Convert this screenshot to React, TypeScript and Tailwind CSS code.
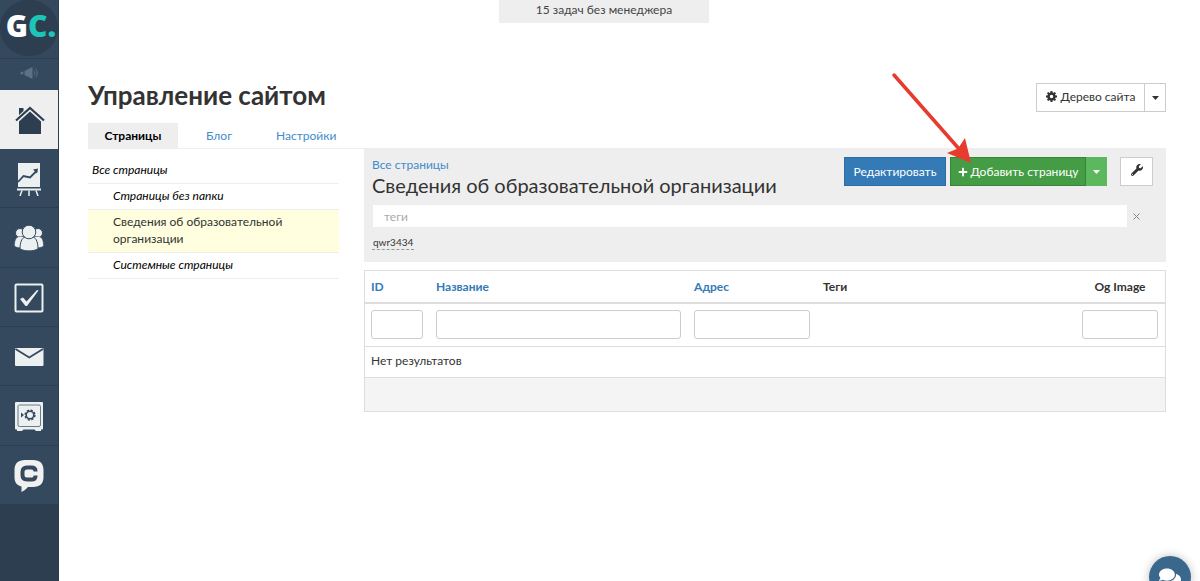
import type { ReactNode } from "react";
import { FaPlus, FaWrench, FaComments } from "react-icons/fa";

type NavItem = {
  label: string;
  icon: ReactNode;
};

type TreeItem = {
  title: string;
  nested?: boolean;
  active?: boolean;
};

const treeItems: TreeItem[] = [
  { title: "Все страницы" },
  { title: "Страницы без папки", nested: true },
  { title: "Сведения об образовательной организации", nested: true, active: true },
  { title: "Системные страницы", nested: true },
];

const navItems: NavItem[] = [
  {
    label: "Трафик",
    icon: (
      <svg width="30" height="34" viewBox="0 0 30 34" fill="none" stroke="#ecf0f1">
        <rect x="4" y="1" width="22" height="24" fill="#ecf0f1" stroke="none" />
        <path d="M4 20 9.500 14l6.500 1.500 7-7" stroke="#34495e" strokeWidth="1.800" />
        <path d="m19 7.500 5-1-1 5z" fill="#34495e" stroke="none" />
        <path d="M3 27.500h24" strokeWidth="2" />
        <path d="M8 28.500 6 34M15 28.500V34M22 28.500l2 5.500" strokeWidth="1.500" />
      </svg>
    ),
  },
  {
    label: "Пользователи",
    icon: (
      <svg width="30" height="26" viewBox="0 0 30 26" fill="#ecf0f1" stroke="#34495e">
        <circle cx="6" cy="8" r="4.500" />
        <circle cx="24" cy="8" r="4.500" />
        <path d="M.5 21c0-5 1-9 5-9.500h5V22C6 23 3 23 .5 21zM29.500 21c0-5-1-9-5-9.500h-5V22c4.500 1 7.500 1 10-1z" strokeWidth=".5" />
        <path d="M6 24c0-6 1.500-11 5-12h8c3.500 1 5 6 5 12-5 2.500-13 2.500-18 0z" />
        <circle cx="15" cy="7" r="6.800" />
      </svg>
    ),
  },
  {
    label: "Обучение",
    icon: (
      <svg width="30" height="30" viewBox="0 0 30 30" fill="none">
        <rect x="1.500" y="1.500" width="27" height="27" rx="1" stroke="#ecf0f1" strokeWidth="2" />
        <path d="m6 16 3-1.500 3.500 4L23 7l1.500.500L13 23h-1.500z" fill="#ecf0f1" />
      </svg>
    ),
  },
  {
    label: "Сообщения",
    icon: (
      <svg width="30" height="18" viewBox="0 0 30 18">
        <rect x="1" width="28.500" height="18" rx="1" fill="#ecf0f1" />
        <path d="m1.500 1 13.750 8.500L29 1" fill="none" stroke="#34495e" strokeWidth="1.800" />
      </svg>
    ),
  },
  {
    label: "Продажи",
    icon: (
      <svg width="30" height="30" viewBox="0 0 30 30" fill="none">
        <path d="M2 1h26a1 1 0 0 1 1 1v25.500a1 1 0 0 1-1 1h-1V30h-5l-1.500-1.500h-11L8 30H3v-1.500H2a1 1 0 0 1-1-1V2a1 1 0 0 1 1-1z" fill="#ecf0f1" />
        <rect x="4" y="4" width="22.500" height="21.500" rx="1.500" stroke="#34495e" strokeOpacity=".7" />
        <path d="m7 11.500 3 2.500-3 2.500z" fill="#34495e" />
        <circle cx="16" cy="14" r="3.800" stroke="#34495e" strokeWidth="1.600" />
        <circle cx="16" cy="14" r="4.900" stroke="#34495e" strokeWidth="1.500" strokeDasharray="2.200 1.650" />
      </svg>
    ),
  },
  {
    label: "Чатиум",
    icon: (
      <svg width="30" height="32" viewBox="0 0 30 32" fill="none">
        <path d="M11 0h8c7 0 10.500 3.500 10.500 10v7c0 6.500-3.500 10-10.500 10h-5c-2 2-4 4-6.500 5V26.500C3 25.500.500 22.500.500 17v-7C.500 3.500 4 0 11 0z" fill="#f0f0f0" />
        <path d="M21.500 11.500V11c0-2.500-1.500-3.500-4-3.500h-4.500c-3 0-4.500 1.500-4.500 4.500v3c0 3 1.500 4.500 4.500 4.500h4.500c2.500 0 4-1 4-3.500v-.500" stroke="#34495e" strokeWidth="4" />
      </svg>
    ),
  },
];

function Sidebar() {
  return (
    <nav className="w-[59px] shrink-0 border-r border-[#2c3e50] bg-[#2c3e50]">
      <a
        href="#"
        className="flex h-[58px] items-start justify-center bg-[#34495e] font-['Open_Sans',sans-serif] text-[30px] leading-none font-extrabold"
      >
        <span className="flex h-14 w-full items-center justify-center rounded-full bg-[#2c3e50] pb-1 pl-1 text-white">
          G<span className="text-[#1dc4b8]">C.</span>
        </span>
      </a>
      <a
        href="#"
        aria-label="Новости"
        className="flex h-8 items-center justify-center border-t border-[#2c3e50] bg-[#34495e] pb-1"
      >
        <svg width="18" height="12" viewBox="0 0 18 12" fill="#5d7186">
          <circle cx="2" cy="6" r="1.600" />
          <path d="M4.500 4 12.500 0v12l-8-4z" />
          <path d="M14 3.500c1.200 1.500 1.200 3.500 0 5M15.500 1.500c2.200 2.500 2.200 6.500 0 9" fill="none" stroke="#5d7186" />
        </svg>
      </a>
      <a href="#" aria-label="Сайт" className="flex h-[59px] items-center justify-center bg-[#efefef] pl-px">
        <svg width="30" height="28" viewBox="0 0 30 28" fill="#2c3e50">
          <path d="M4 2h4.500v3L4 9z" />
          <path d="M1 14.500 15 2l14 12.500" fill="none" stroke="#2c3e50" strokeWidth="2.200" />
          <path d="M15 5.500 26 15.500V28H4V15.500z" />
        </svg>
      </a>
      <div className="grid h-89 auto-rows-fr">
        {navItems.map((item) => (
          <a
            key={item.label}
            href="#"
            aria-label={item.label}
            className="flex items-center justify-center border-b border-[#2c3e50] bg-[#34495e] pt-0.5"
          >
            {item.icon}
          </a>
        ))}
      </div>
    </nav>
  );
}

function Caret() {
  return (
    <svg width="7" height="4" viewBox="0 0 7 4" fill="currentColor">
      <path d="M0 0h7L3.500 4z" />
    </svg>
  );
}

function GearIcon() {
  return (
    <svg width="11" height="11" viewBox="0 0 22 22" fill="none" stroke="#333">
      <circle cx="11" cy="11" r="6" strokeWidth="5" />
      <path d="M11 0v5M11 17v5M0 11h5M17 11h5M3.200 3.200l3.600 3.600M15.200 15.200l3.600 3.600M18.800 3.200l-3.600 3.600M6.800 15.200l-3.600 3.600" strokeWidth="4" />
    </svg>
  );
}

function PageHeader() {
  return (
    <header className="mt-[60px] flex items-start justify-between">
      <h1 className="text-[26px] leading-6 font-bold text-[#333]">Управление сайтом</h1>
      <div className="flex h-[29px] border border-[#ccc] text-xs text-[#333]">
        <button type="button" className="flex w-[107px] items-center justify-center gap-1 pb-0.5">
          <GearIcon />
          Дерево сайта
        </button>
        <button
          type="button"
          aria-label="Открыть меню"
          className="flex w-[21px] items-center justify-center border-l border-[#ccc]"
        >
          <Caret />
        </button>
      </div>
    </header>
  );
}

function Tabs() {
  return (
    <div className="mt-[11px] flex gap-3 border-b border-[#eee] text-xs leading-[25px] text-[#428bca]">
      <a href="#" className="w-[90px] bg-[#eee] text-center font-bold text-black">
        Страницы
      </a>
      <a href="#" className="px-4">
        Блог
      </a>
      <a href="#" className="px-4">
        Настройки
      </a>
    </div>
  );
}

function PageTree() {
  return (
    <ul className="mt-[9px] w-[251px] shrink-0 text-xs leading-[17px]">
      {treeItems.map((item) => (
        <li key={item.title} className={item.active ? "border-b border-[#eee] bg-[#ffffdf]" : "border-b border-[#eee]"}>
          <a
            href="#"
            className={`block pt-[3px] pr-4 pb-[5px] ${item.nested ? "pl-[25px]" : "pl-1"} ${
              item.active ? "text-[#333]" : "text-black italic"
            }`}
          >
            {item.title}
          </a>
        </li>
      ))}
    </ul>
  );
}

function PointerArrow() {
  return (
    <svg
      width="84"
      height="94"
      viewBox="0 0 84 94"
      aria-hidden="true"
      className="pointer-events-none absolute -top-[85px] -left-[60px]"
    >
      <path d="M4 3 70 78" stroke="#e63b2e" strokeWidth="3.500" strokeLinecap="round" />
      <path d="M81 91 57 81l11-4.500L75 66z" fill="#e63b2e" />
    </svg>
  );
}

function FolderPanel() {
  return (
    <section className="bg-[#eee] pt-2 pr-[13px] pb-3 pl-2">
      <div className="flex items-start justify-between">
        <div>
          <a href="#" className="block text-xs leading-4 text-[#428bca]">
            Все страницы
          </a>
          <h2 className="text-xl leading-6 font-normal text-[#333]">Сведения об образовательной организации</h2>
        </div>
        <div className="flex h-[29px] text-xs">
          <button type="button" className="w-[102px] border border-[#2e6da4] bg-[#337ab7] text-white">
            Редактировать
          </button>
          <div className="relative ml-1 flex text-white">
            <button
              type="button"
              className="flex w-[136px] items-center justify-center gap-[3px] border border-[#398439] bg-[#449d44]"
            >
              <FaPlus size={10} />
              Добавить страницу
            </button>
            <button
              type="button"
              aria-label="Другие действия"
              className="flex w-[21px] items-center justify-center bg-[#5cb85c]"
            >
              <Caret />
            </button>
            <PointerArrow />
          </div>
          <button
            type="button"
            aria-label="Настройки папки"
            className="ml-[13px] flex w-[33px] items-center justify-center border border-[#ccc] bg-white pb-1 text-[#333]"
          >
            <FaWrench size={12} />
          </button>
        </div>
      </div>
      <div className="mt-2 flex items-center">
        <input
          type="text"
          aria-label="теги"
          placeholder="теги"
          className="ml-px h-[22px] min-w-0 flex-1 bg-white px-[11px] text-xs outline-none placeholder:text-[#aaa]"
        />
        <button type="button" aria-label="Очистить" className="mr-[10px] flex w-4 justify-end text-[#888]">
          <svg width="7" height="7" viewBox="0 0 7 7" stroke="currentColor" className="mr-[3px]">
            <path d="m.5.5 6 6M6.500.500l-6 6" />
          </svg>
        </button>
      </div>
      <div className="mt-[9px] flex">
        <a
          href="#"
          className="border-b border-dashed border-[#999] px-px text-[10px] leading-[13px] text-[#333]"
        >
          qwr3434
        </a>
      </div>
    </section>
  );
}

function FilterInput({ label }: { label: string }) {
  return (
    <input
      type="text"
      aria-label={label}
      className="block h-[29px] w-full rounded-[3px] border border-[#ccc] bg-white px-2 outline-none"
    />
  );
}

function PagesTable() {
  return (
    <div className="mt-2 border border-[#ddd]">
      <table className="w-full table-fixed border-collapse text-left text-xs text-[#333]">
        <colgroup>
          <col className="w-[65px]" />
          <col />
          <col className="w-[129px]" />
          <col />
          <col className="w-[90px]" />
        </colgroup>
        <thead>
          <tr className="h-[32px] border-b-2 border-[#ddd]">
            <th className="pr-[7px] pl-[6px] text-[#337ab7]">
              <a href="#">ID</a>
            </th>
            <th className="pr-[7px] pl-[6px] text-[#337ab7]">
              <a href="#">Название</a>
            </th>
            <th className="pr-[7px] pl-[6px] text-[#337ab7]">
              <a href="#">Адрес</a>
            </th>
            <th className="px-[6px]">Теги</th>
            <th className="px-[6px] text-center">Og Image</th>
          </tr>
          <tr className="h-[43px] border-b border-[#ddd]">
            <td className="pr-[7px] pl-[6px]">
              <FilterInput label="ID" />
            </td>
            <td className="pr-[7px] pl-[6px]">
              <FilterInput label="Название" />
            </td>
            <td className="pr-[7px] pl-[6px]">
              <FilterInput label="Адрес" />
            </td>
            <td />
            <td className="px-[7px]">
              <FilterInput label="Og Image" />
            </td>
          </tr>
        </thead>
        <tbody>
          <tr className="h-[31px] border-b border-[#ddd]">
            <td colSpan={5} className="px-[6px] pb-0.5">
              Нет результатов
            </td>
          </tr>
        </tbody>
      </table>
      <div className="h-[33px] bg-[#f4f4f4]" />
    </div>
  );
}

export default function App() {
  return (
    <div className="flex min-h-screen bg-white font-[Lato,sans-serif]">
      <Sidebar />
      <div className="min-w-0 flex-1">
        <div className="flex justify-center pr-[51px]">
          <a href="#" className="w-[210px] bg-[#eee] pt-px pb-1 text-center text-xs leading-[18px] text-[#444]">
            15 задач без менеджера
          </a>
        </div>
        <main className="pr-[34px] pl-[29px]">
          <PageHeader />
          <Tabs />
          <div className="flex gap-[25px]">
            <PageTree />
            <div className="min-w-0 flex-1">
              <FolderPanel />
              <PagesTable />
            </div>
          </div>
        </main>
      </div>
      <button
        type="button"
        aria-label="Открыть чат"
        className="fixed right-[9px] -bottom-[17px] flex size-[42px] items-center justify-center rounded-full bg-[#3a678c] text-white shadow-[0_0_10px_rgba(0,0,0,0.25)]"
      >
        <FaComments size={22} />
      </button>
    </div>
  );
}
